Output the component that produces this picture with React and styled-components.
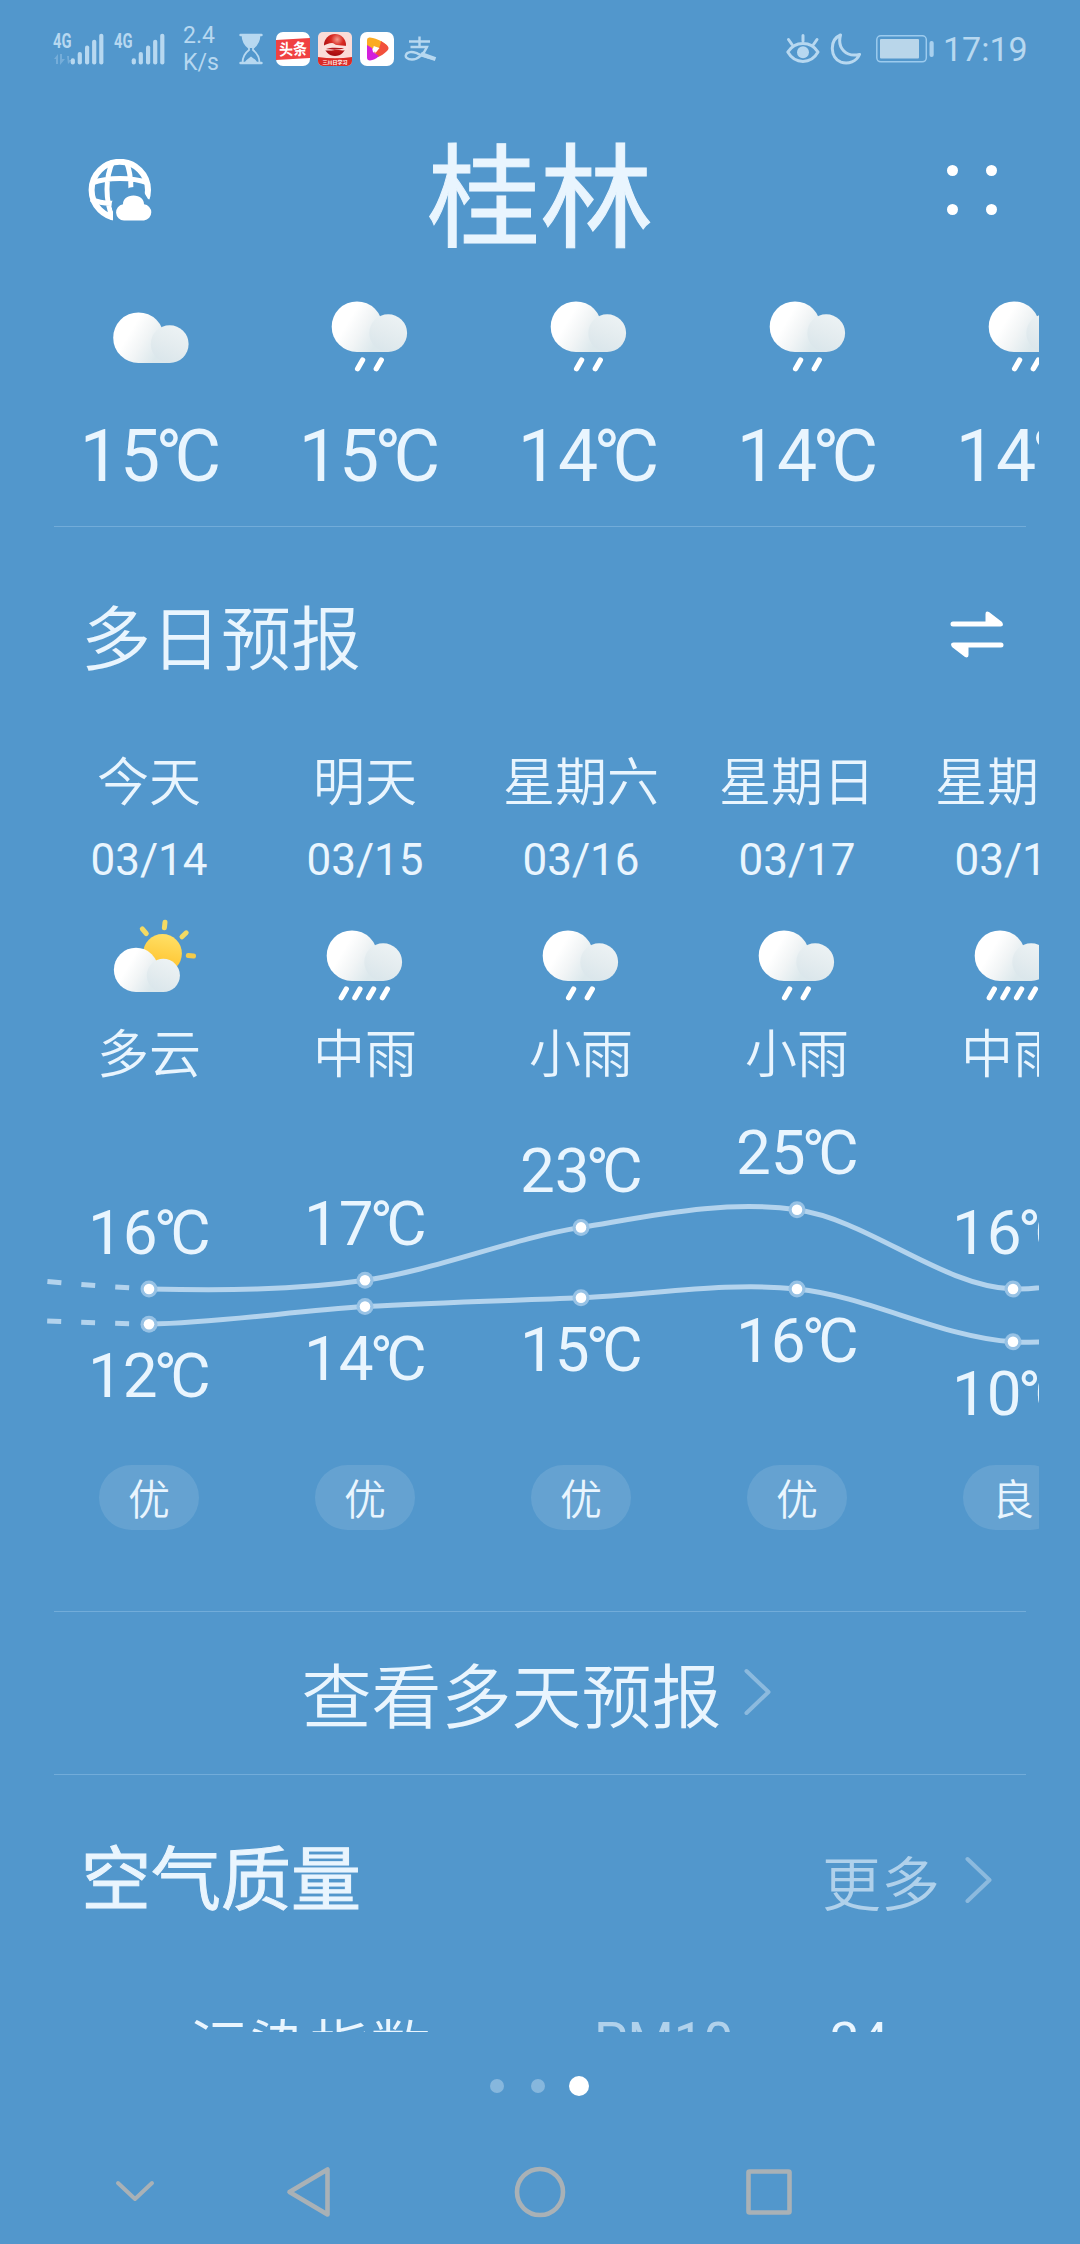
import React from 'react';
import styled, { createGlobalStyle } from 'styled-components';

const hours = [
  { icon: 'cloud', temp: 15 },
  { icon: 'light', temp: 15 },
  { icon: 'light', temp: 14 },
  { icon: 'light', temp: 14 },
  { icon: 'light', temp: 14 },
];

const days = [
  { name: '今天', date: '03/14', icon: 'sunny', text: '多云', high: 16, low: 12, air: '优' },
  { name: '明天', date: '03/15', icon: 'rain', text: '中雨', high: 17, low: 14, air: '优' },
  { name: '星期六', date: '03/16', icon: 'light', text: '小雨', high: 23, low: 15, air: '优' },
  { name: '星期日', date: '03/17', icon: 'light', text: '小雨', high: 25, low: 16, air: '优' },
  { name: '星期一', date: '03/18', icon: 'rain', text: '中雨', high: 16, low: 10, air: '良' },
];

const DAY_WIDTH = 216;

const Cloud = ({ transform }) => (
  <g transform={transform}>
    <defs>
      <linearGradient id="cloudBody" gradientUnits="userSpaceOnUse" x1="28" y1="46" x2="58" y2="64">
        <stop offset="0" stopColor="#fff" />
        <stop offset="0.45" stopColor="#f2f5f6" />
        <stop offset="1" stopColor="#dce8ec" />
      </linearGradient>
      <linearGradient id="cloudPuff" gradientUnits="userSpaceOnUse" x1="76" y1="40" x2="60" y2="75">
        <stop offset="0" stopColor="#ecf2f4" />
        <stop offset="0.5" stopColor="#e4ecef" />
        <stop offset="1" stopColor="#dae6eb" />
      </linearGradient>
    </defs>
    <path d="M37 76a25.3 25.3 0 1 1 25.3 -25.3V76z" fill="url(#cloudBody)" />
    <path d="M37 76h31V57H37z" fill="url(#cloudBody)" />
    <circle cx="68.2" cy="57.1" r="18.9" fill="url(#cloudPuff)" />
  </g>
);

const WeatherIcon = ({ type }) => {
  if (type === 'sunny') {
    return (
      <IconSvg viewBox="0 0 100 100">
        <defs>
          <linearGradient id="sun" x1="0.6" y1="0" x2="0.4" y2="1">
            <stop offset="0" stopColor="#ffe066" />
            <stop offset="1" stopColor="#ffbf26" />
          </linearGradient>
        </defs>
        <g stroke="#f3da63" strokeWidth="5" strokeLinecap="round">
          <path d="M43.3 23.8l4 4.8" />
          <path d="M66 17.2l-.6 5.5" />
          <path d="M87.2 27.8l-4.2 4" />
          <path d="M89.3 50.5l5.2.6" stroke="#f3cb4c" />
        </g>
        <circle cx="63.5" cy="48.5" r="19.4" fill="url(#sun)" />
        <Cloud transform="translate(4.6 20.4) scale(0.876)" />
      </IconSvg>
    );
  }
  if (type === 'cloud') {
    return (
      <IconSvg viewBox="0 0 100 100">
        <Cloud transform="translate(.5 11)" />
      </IconSvg>
    );
  }
  const drops = type === 'rain' ? [26.3, 39.9, 53.6, 67.4] : [37.6, 56.3];
  return (
    <IconSvg viewBox="0 0 100 100">
      <Cloud />
      {drops.map((x) => (
        <path key={x} d={`M${x + 5} 84l-5 8.8`} stroke="#fff" strokeWidth="5.3" strokeLinecap="round" />
      ))}
    </IconSvg>
  );
};

const Signal = ({ active }) => (
  <SignalSvg width="52" height="32" viewBox="0 0 52 32">
    <text x="0" y="15" textLength="18.5" lengthAdjust="spacingAndGlyphs">4G</text>
    {active && <path d="M1 26l4-5v10H3v-5zM7 21h2v5h3l-5 6z M14 23h2v4h3l-4 4z" opacity="0.35" />}
    <rect x="17.7" y="25.3" width="4.2" height="6.2" rx="2" />
    <rect x="24.7" y="19" width="4.2" height="12.5" rx="2" />
    <rect x="32" y="12.5" width="4.2" height="19" rx="2" />
    <rect x="39.1" y="6.7" width="4.2" height="24.8" rx="2" />
    <rect x="46.2" y="0.8" width="4.2" height="30.7" rx="2" />
  </SignalSvg>
);

const Hourglass = () => (
  <svg width="24" height="32" viewBox="0 0 24 32">
    <path d="M1.5 2h21M1.5 30h21" stroke="#b7d8f0" strokeWidth="2.4" strokeLinecap="round" />
    <path d="M3.5 2h17c0 7-2.5 10-6.5 13v2c4 3 6.5 6 6.5 13h-17c0-7 2.5-10 6.5-13v-2c-4-3-6.5-6-6.5-13z" fill="none" stroke="#b7d8f0" strokeWidth="1.8" />
    <path d="M3.5 3h17c-.5 6-3 9-7 12h-3c-4-3-6.5-6-7-12zM6 29c1.5-3 4-3.5 6-5.500 2 2 4.5 2.5 6 5.5z" fill="#b7d8f0" />
  </svg>
);

const NewsApp = () => (
  <svg width="34" height="34" viewBox="0 0 34 34">
    <rect width="34" height="34" rx="7" fill="#fff" />
    <path d="M0 8l34-2v20L0 28z" fill="#f04142" />
    <text x="17" y="23" textAnchor="middle" fontFamily="'Noto Sans CJK SC', sans-serif" fontWeight="700" fontSize="16" textLength="28" lengthAdjust="spacingAndGlyphs" fill="#fff" transform="rotate(-2 17 17)">头条</text>
  </svg>
);

const RedApp = () => (
  <svg width="34" height="34" viewBox="0 0 34 34">
    <defs>
      <radialGradient id="ball" cx="0.6" cy="0.25" r="0.7">
        <stop offset="0" stopColor="#f49a8c" />
        <stop offset="0.4" stopColor="#d92a22" />
        <stop offset="1" stopColor="#a80d12" />
      </radialGradient>
    </defs>
    <rect width="34" height="34" rx="5" fill="#fbdcd8" />
    <circle cx="17" cy="13" r="11" fill="url(#ball)" />
    <path d="M4 15c4-3 7-4 10-4 2 0 3 2 5 2 3 0 6 1 11 1v4c-6 1-9 0-13 0-5 1-8 0-13 1z" fill="#fce0dc" />
    <path d="M8 17c5-2 12-1 18-1-3 2-12 2-18 1z" fill="#b3161a" />
    <path d="M0 25q17 2.5 34 0v4a5 5 0 0 1-5 5H5a5 5 0 0 1-5-5z" fill="#dc2b26" />
    <text x="17" y="32" textAnchor="middle" fontFamily="'Noto Sans CJK SC', sans-serif" fontWeight="700" fontSize="5" fill="#fff">三川日学习</text>
  </svg>
);

const VideoApp = () => (
  <svg width="34" height="34" viewBox="0 0 34 34">
    <rect width="34" height="34" rx="7" fill="#fff" />
    <path d="M7 8q0-3 3-2.5c8 1 14 5 17 8l-8 5-5-4-2 3-5-2z" fill="#fbab23" />
    <path d="M21 9c8 5 9 7 6 10-3 3-6 5-9 6l-4-5c5-2 6-5 7-11z" fill="#f2513c" />
    <path d="M7 13l5 3 1 4 6 4c-3 3-6 4-9 4.5-2 0-3-1-3-3z" fill="#d31fdc" />
    <path d="M13.5 14l6 2-4 5z" fill="#fff" />
  </svg>
);

const PayIcon = () => (
  <svg width="34" height="28" viewBox="0 0 34 28" fill="none" stroke="#b7d8f0" strokeWidth="2.4">
    <path d="M5 6.5h21M15.5 1.5v10M6.5 12h16.5c-3 7-9 12.5-15 12.5-5 0-7-2.5-6-4.8 1.2-3 6-3.4 10-1.8C17 20 24 23.5 31 23.5" />
    <path d="M17 19l14.5 5.2" strokeWidth="4" />
  </svg>
);

const EyeIcon = () => (
  <svg width="34" height="32" viewBox="0 0 34 32" fill="none" stroke="#b7d8f0" strokeWidth="3" strokeLinecap="round">
    <path d="M1.8 19C9 7.5 25 7.5 32 19 25 31.5 9 31.5 1.8 19z" strokeLinejoin="round" />
    <circle cx="17" cy="19.2" r="6" fill="#b7d8f0" stroke="none" />
    <path d="M17 2.5v5.5M2.5 6.5l3.5 5M31 6.5l-3.5 5" />
  </svg>
);

const MoonIcon = () => (
  <svg width="31" height="32" viewBox="0 0 31 32" fill="none" stroke="#b7d8f0" strokeWidth="3" strokeLinejoin="round">
    <path d="M10.5 2C-1 7 0 25 11 29.2c7.5 2.6 15.5-.8 18.5-7.7C16 24.5 7 15 10.5 2z" />
  </svg>
);

const BatteryIcon = () => (
  <svg width="58" height="28" viewBox="0 0 58 28">
    <rect x="0.8" y="0.8" width="49.5" height="26" rx="4" fill="none" stroke="#9ccbee" strokeWidth="1.5" />
    <rect x="4" y="4" width="39" height="19.5" rx="1" fill="#b9d6ea" />
    <rect x="53.5" y="6" width="4.2" height="16" rx="2" fill="#a9d0ee" />
  </svg>
);

const GlobeIcon = () => (
  <svg width="64" height="62" viewBox="0 0 64 62">
    <defs>
      <mask id="globeMask">
        <rect width="64" height="62" fill="#fff" />
        <path d="M25 62V52c-2-4-2-9 1-13 3-1 5-2 9-4 2-4 5-7 11-7 6 0 9 3 11 7l3 5 6 2v20z" fill="#000" />
      </mask>
    </defs>
    <g fill="none" stroke="#fff" strokeWidth="5" mask="url(#globeMask)">
      <circle cx="31.8" cy="31" r="28.2" strokeWidth="6" />
      <path d="M25 2c-8 17-8 39 0 58M38 2c4 9 5 18 5 29M4 24c16-6 40-6 56 0M3 40c8 4 16 5 26 4" />
    </g>
    <path d="M36 61.5a8.2 8.2 0 0 1-1-16.3C35 40 39 36.5 45.5 36.5S56 40 56 45.2a8.2 8.2 0 0 1 0 16.3z" fill="#fff" />
  </svg>
);

const SwapIcon = () => (
  <svg width="54" height="48" viewBox="0 0 54 48" fill="#fff">
    <path d="M3 10.5h32.5V3q0-3.5 3.5-2l13 10q2.5 4.5-1.5 4.5H3a2.5 2.5 0 0 1 0-5z" />
    <path d="M51 36.5H18.5V44q0 3.5-3.5 2L2 36q-2.5-4.5 1.5-4.5H51a2.5 2.5 0 0 1 0 5z" />
  </svg>
);

const Chevron = () => (
  <svg width="27" height="48" viewBox="0 0 27 48" fill="none" stroke="#8cbade" strokeWidth="4" strokeLinecap="round" strokeLinejoin="round">
    <path d="M2.500 3l22 21-22 21" />
  </svg>
);

const xOf = (i) => 108 + (i - 1) * DAY_WIDTH;
const yOf = (t) => 187 - (t - 16) * 8.8;

// Catmull-Rom spline through the temperatures
const curve = (temps, from, to) => {
  let d = `M${xOf(from)} ${yOf(temps[from])}`;
  for (let i = from; i < to; i++) {
    const before = temps[i - 1] ?? temps[i];
    const after = temps[i + 2] ?? temps[i + 1];
    const c1 = yOf(temps[i] + (temps[i + 1] - before) / 6);
    const c2 = yOf(temps[i + 1] - (after - temps[i]) / 6);
    d += ` C${xOf(i) + DAY_WIDTH / 3} ${c1} ${xOf(i + 1) - DAY_WIDTH / 3} ${c2} ${xOf(i + 1)} ${yOf(temps[i + 1])}`;
  }
  return d;
};

const TrendLine = ({ temps, past }) => (
  <g fill="none" stroke="#b3d3ed" strokeWidth="5">
    <path d={curve(temps, 1, 6)} />
    <path d={`M108 ${yOf(temps[1])}Q60 ${yOf(temps[1]) - past / 3} 0 ${yOf(temps[1]) - past}`} strokeDasharray="14 20" strokeDashoffset="14" />
    {temps.slice(1, 6).map((t, i) => (
      <g key={i} stroke="none">
        <circle cx={xOf(i + 1)} cy={yOf(t)} r="8.5" fill="#97c2e5" />
        <circle cx={xOf(i + 1)} cy={yOf(t)} r="5.3" fill="#fff" />
      </g>
    ))}
  </g>
);

const TrendLabel = ({ x, y, value }) => (
  <text x={x - 61} y={y}>
    {value}
    <tspan dx="-4" letterSpacing="-0.108em">°C</tspan>
  </text>
);

const Trend = () => (
  <TrendSvg width="998" height="348" viewBox="0 0 998 348">
    <TrendLine temps={[18, ...days.map((d) => d.high), 23]} past={8} />
    <TrendLine temps={[13, ...days.map((d) => d.low), 13]} past={3.5} />
    {days.map((d, i) => (
      <React.Fragment key={d.date}>
        <TrendLabel x={xOf(i + 1)} y={yOf(d.high) - 35.5} value={d.high} />
        <TrendLabel x={xOf(i + 1)} y={yOf(d.low) + 73} value={d.low} />
      </React.Fragment>
    ))}
  </TrendSvg>
);

const App = () => {
  return (
    <Screen>
      <GlobalStyle />
      <StatusBar>
        <StatusGroup>
          <Signal active />
          <StatusItem $left={9}><Signal /></StatusItem>
          <Speed>2.4<br />K/s</Speed>
          <StatusItem $left={21}><Hourglass /></StatusItem>
          <StatusItem $left={13}><NewsApp /></StatusItem>
          <StatusItem $left={8}><RedApp /></StatusItem>
          <StatusItem $left={8}><VideoApp /></StatusItem>
          <StatusItem $left={10}><PayIcon /></StatusItem>
        </StatusGroup>
        <StatusGroup>
          <EyeIcon />
          <StatusItem $left={10}><MoonIcon /></StatusItem>
          <StatusItem $left={15}><BatteryIcon /></StatusItem>
          <Clock>17:19</Clock>
        </StatusGroup>
      </StatusBar>

      <Header>
        <GlobeIcon />
        <City>桂林</City>
        <DotMenu>
          <i /><i /><i /><i />
        </DotMenu>
      </Header>

      <Scroller>
        <Row>
          {hours.map((hour, i) => (
            <Hour key={i}>
              <WeatherIcon type={hour.icon} />
              <HourTemp>{hour.temp}<Unit>°C</Unit></HourTemp>
            </Hour>
          ))}
        </Row>
      </Scroller>
      <Divider />

      <SectionHeader $height={222}>
        <SectionTitle>多日预报</SectionTitle>
        <SwapButton><SwapIcon /></SwapButton>
      </SectionHeader>

      <Scroller>
        <Row>
          {days.map((day) => (
            <Day key={day.date}>
              <DayName>{day.name}</DayName>
              <DayDate>{day.date}</DayDate>
              <WeatherIcon type={day.icon} />
              <DayText>{day.text}</DayText>
            </Day>
          ))}
        </Row>
        <Trend />
        <Row>
          {days.map((day) => (
            <Day key={day.date}>
              <AirBadge>{day.air}</AirBadge>
            </Day>
          ))}
        </Row>
      </Scroller>

      <DaysBottom />
      <Divider />
      <MoreDays>
        查看多天预报
        <Chevron />
      </MoreDays>
      <Divider />

      <SectionHeader $height={202}>
        <SectionTitle $bold>空气质量</SectionTitle>
        <More>
          更多
          <Chevron />
        </More>
      </SectionHeader>
      <AirRow>
        <AirLabel>污染指数</AirLabel>
        <AirName>PM10</AirName>
        <AirValue>24</AirValue>
      </AirRow>

      <Pager>
        <PageDot />
        <PageDot />
        <PageDot $active />
      </Pager>

      <NavBar viewBox="0 0 1080 104">
        <path d="M118 43l17 16 17-16" strokeWidth="4" />
        <path d="M327.5 29.5v45L289.5 52z" />
        <circle cx="540" cy="52" r="23" />
        <rect x="748.5" y="31.5" width="41" height="41" rx="1" />
      </NavBar>
    </Screen>
  );
};

const GlobalStyle = createGlobalStyle`
  body {
    margin: 0;
    background: #5297cc;
  }
`;

const Screen = styled.div`
  width: 1080px;
  height: 2244px;
  overflow: hidden;
  display: flex;
  flex-direction: column;
  background: #5297cc;
  color: #e9f5fe;
  font-family: Roboto, 'Noto Sans CJK SC', sans-serif;
  font-weight: 350;

  svg {
    display: block;
    flex-shrink: 0;
  }
`;

const StatusBar = styled.div`
  height: 98px;
  padding: 0 54px 0 53px;
  box-sizing: border-box;
  display: flex;
  justify-content: space-between;
  color: #b7d8f0;
`;

const StatusGroup = styled.div`
  display: flex;
  align-items: center;
`;

const StatusItem = styled.span`
  margin-left: ${(props) => props.$left}px;
`;

const SignalSvg = styled.svg`
  overflow: visible;
  fill: #b7d8f0;

  text {
    font-size: 20px;
    font-weight: 700;
  }
`;

const Speed = styled.span`
  width: 35px;
  margin-left: 17px;
  font-size: 23px;
  font-weight: 400;
  line-height: 27.5px;
  white-space: nowrap;
`;

const Clock = styled.span`
  width: 83px;
  margin-left: 9px;
  font-size: 34px;
  font-weight: 400;
  white-space: nowrap;
`;

const Header = styled.header`
  height: 178px;
  padding: 5px 83px 0 88px;
  box-sizing: border-box;
  display: grid;
  grid-template-columns: 64px 1fr 50px;
  align-items: center;
`;

const City = styled.h1`
  margin: 20px 0 0;
  padding-right: 19px;
  font-size: 113px;
  line-height: 120px;
  font-weight: 400;
  text-align: center;
  -webkit-text-stroke: 1px #e9f5fe;
`;

const DotMenu = styled.div`
  display: grid;
  grid-template-columns: 11px 11px;
  gap: 27.5px 28px;
  padding-top: 1px;

  i {
    height: 11px;
    border-radius: 50%;
    background: #fff;
  }
`;

const Scroller = styled.section`
  margin: 0 41px;
  overflow: hidden;
`;

const Row = styled.div`
  display: flex;
`;

const IconSvg = styled.svg`
  width: 100px;
  height: 100px;
`;

const Hour = styled.div`
  flex: 0 0 219px;
  height: 250px;
  display: flex;
  flex-direction: column;
  align-items: center;
`;

const HourTemp = styled.div`
  font-size: 71.5px;
  font-weight: 400;
  line-height: 161px;
`;

const Unit = styled.span`
  margin: 0 0.108em 0 -0.065em;
  letter-spacing: -0.108em;
`;

const Divider = styled.div`
  height: 1px;
  margin: 0 54px;
  background: #72acd9;
`;

const SectionHeader = styled.header`
  height: ${(props) => props.$height}px;
  padding: 0 76px 0 81px;
  display: flex;
  align-items: center;
  justify-content: space-between;
`;

const SectionTitle = styled.h2`
  margin: 0;
  padding-top: ${(props) => (props.$bold ? 9 : 6)}px;
  font-size: 70px;
  line-height: 80px;
  font-weight: ${(props) => (props.$bold ? 400 : 350)};
  -webkit-text-stroke: ${(props) => (props.$bold ? '1px #e9f5fe' : '0')};
`;

const SwapButton = styled.div`
  margin-bottom: 6px;
`;

const Day = styled.div`
  flex: 0 0 ${DAY_WIDTH}px;
  display: flex;
  flex-direction: column;
  align-items: center;
`;

const DayName = styled.div`
  height: 64px;
  font-size: 52px;
  line-height: 69px;
`;

const DayDate = styled.div`
  height: 92px;
  font-size: 44px;
  font-weight: 400;
  line-height: 95px;
`;

const DayText = styled.div`
  height: 97px;
  font-size: 52px;
  line-height: 101px;
`;

const TrendSvg = styled.svg`
  text {
    fill: #e9f5fe;
    font-size: 62px;
    font-weight: 400;
  }
`;

const AirBadge = styled.div`
  width: 100px;
  height: 65px;
  margin-top: 15px;
  border-radius: 33px;
  background: rgba(255, 255, 255, 0.11);
  font-size: 42px;
  line-height: 71px;
  text-align: center;
`;

const DaysBottom = styled.div`
  height: 81px;
`;

const MoreDays = styled.div`
  height: 162px;
  padding: 0 8px 2px 0;
  box-sizing: border-box;
  display: flex;
  align-items: center;
  justify-content: center;
  gap: 22px;
  font-size: 70px;
`;

const More = styled.div`
  display: flex;
  align-items: center;
  gap: 25px;
  margin: 8px 12px 0 0;
  color: #b0d1eb;
  font-size: 59px;
`;

const AirRow = styled.div`
  height: 55px;
  padding: 33px 0 0 189px;
  box-sizing: border-box;
  overflow: hidden;
  display: flex;
  align-items: flex-start;
  line-height: 64px;
`;

const AirLabel = styled.span`
  width: 405px;
  margin-top: 8px;
  font-size: 60.5px;
`;

const AirName = styled.span`
  width: 236px;
  color: #b0d1eb;
  font-size: 53px;
  font-weight: 400;
`;

const AirValue = styled.span`
  font-size: 52px;
  font-weight: 400;
`;

const Pager = styled.div`
  height: 108px;
  padding-right: 1px;
  display: flex;
  align-items: center;
  justify-content: center;
  gap: 27px;
`;

const PageDot = styled.span`
  width: ${(props) => (props.$active ? 20 : 14)}px;
  height: ${(props) => (props.$active ? 20 : 14)}px;
  margin-left: ${(props) => (props.$active ? -3 : 0)}px;
  border-radius: 50%;
  background: ${(props) => (props.$active ? '#fff' : '#86b7dd')};
`;

const NavBar = styled.svg`
  width: 1080px;
  height: 104px;
  fill: none;
  stroke: #a9b1b6;
  stroke-width: 4.6;
  stroke-linejoin: round;
  stroke-linecap: round;
`;

export default App;
